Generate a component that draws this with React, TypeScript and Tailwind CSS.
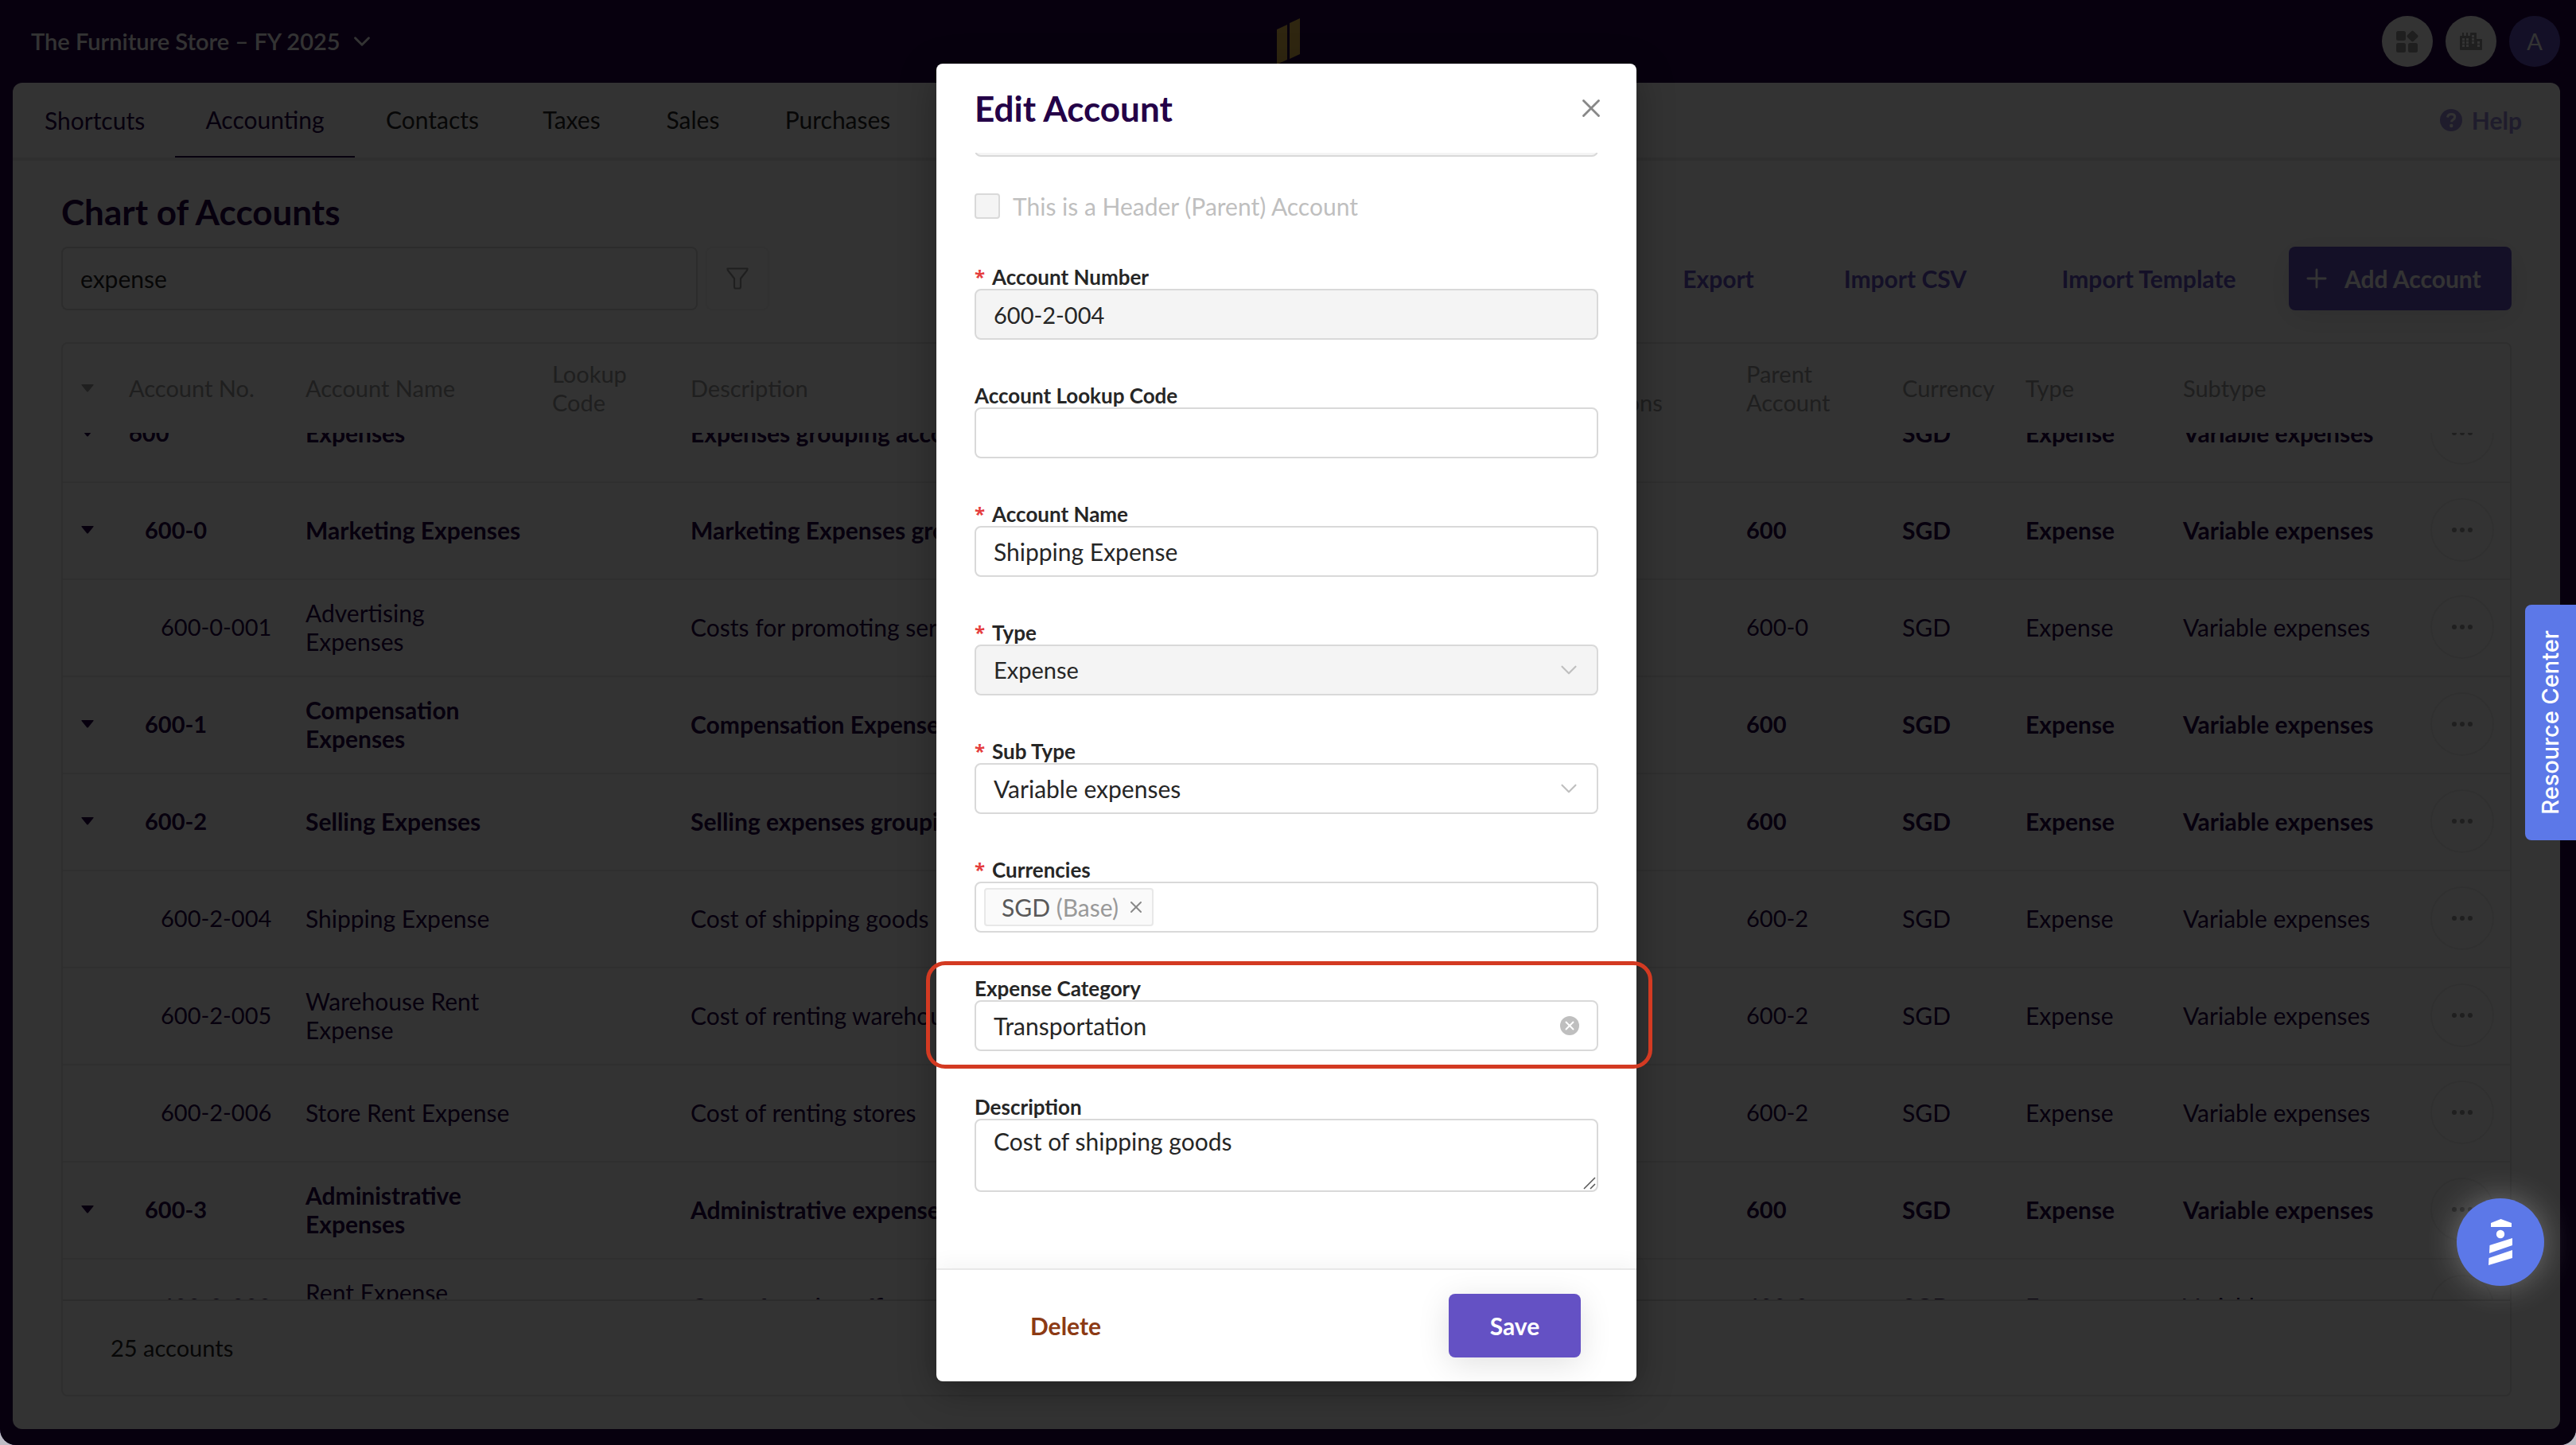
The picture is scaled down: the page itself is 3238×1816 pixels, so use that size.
import type { ReactNode } from 'react'
import { ChevronDown, Plus, X } from 'lucide-react'

interface Account {
  code: string
  name: string
  description: string
  parent: string
  level: number
  isHeader?: boolean
}

const tabs = [
  { label: 'Accounting', width: 'w-[226px]' },
  { label: 'Contacts', width: 'w-[195px]' },
  { label: 'Taxes', width: 'w-[155px]' },
  { label: 'Sales', width: 'w-[150px]' },
  { label: 'Purchases', width: 'w-[214px]' },
]

const accounts: Account[] = [
  { code: '600', name: 'Expenses', description: 'Expenses grouping account', parent: '', level: 0, isHeader: true },
  { code: '600-0', name: 'Marketing Expenses', description: 'Marketing Expenses grouping account', parent: '600', level: 1, isHeader: true },
  { code: '600-0-001', name: 'Advertising Expenses', description: 'Costs for promoting services', parent: '600-0', level: 2 },
  { code: '600-1', name: 'Compensation Expenses', description: 'Compensation Expenses grouping account', parent: '600', level: 1, isHeader: true },
  { code: '600-2', name: 'Selling Expenses', description: 'Selling expenses grouping account', parent: '600', level: 1, isHeader: true },
  { code: '600-2-004', name: 'Shipping Expense', description: 'Cost of shipping goods', parent: '600-2', level: 2 },
  { code: '600-2-005', name: 'Warehouse Rent Expense', description: 'Cost of renting warehouse', parent: '600-2', level: 2 },
  { code: '600-2-006', name: 'Store Rent Expense', description: 'Cost of renting stores', parent: '600-2', level: 2 },
  { code: '600-3', name: 'Administrative Expenses', description: 'Administrative expenses grouping account', parent: '600', level: 1, isHeader: true },
  { code: '600-3-002', name: 'Rent Expense Headquarters', description: 'Cost of renting office', parent: '600-3', level: 2 },
]

const indents = ['pl-0', 'pl-5', 'pl-10']

function Logo() {
  return (
    <svg width="29" height="58" viewBox="0 0 29 58" fill="#ebbe50" aria-hidden="true">
      <path d="M0 14 13 8v44L0 58z" />
      <path d="M16 6 29 0v45l-13 6z" />
    </svg>
  )
}

function Caret() {
  return (
    <svg width="16" height="10" viewBox="0 0 16 10" fill="currentColor" aria-hidden="true">
      <path d="M1 0h14q1 0 .5 1L9 9q-1 1-2 0L.5 1Q0 0 1 0z" />
    </svg>
  )
}

function AppsIcon() {
  return (
    <svg width="28" height="28" viewBox="0 0 28 28" fill="#999" aria-hidden="true">
      <rect x="0" y="1" width="12" height="12" rx="2.5" />
      <rect x="0" y="16" width="12" height="12" rx="2.5" />
      <rect x="15" y="16" width="12" height="12" rx="2.5" />
      <rect x="15" y="2" width="11" height="11" rx="2" transform="rotate(45 20.5 7.5)" />
    </svg>
  )
}

function CityIcon() {
  return (
    <svg width="28" height="24" viewBox="0 0 28 24" aria-hidden="true">
      <path fill="#999" d="M0 6q0-1 1-1h2V1h2v4h3V1h2v4h3V2q0-1 1-1h6q1 0 1 1v7h6q1 0 1 1v12q0 1-1 1H1q-1 0-1-1z" />
      <g fill="#fff">
        <path d="M3 8h3v3H3zM8 8h3v3H8zM3 12h3v3H3zM8 12h3v3H8zM3 16h3v3H3zM8 16h3v3H8z" />
        <path d="M15 4h3v3h-3zM15 8h3v3h-3zM15 12h3v3h-3zM22 12h3v3h-3zM22 16h3v3h-3z" />
      </g>
    </svg>
  )
}

function HelpIcon() {
  return (
    <svg width="28" height="28" viewBox="0 0 28 28" aria-hidden="true">
      <circle cx="14" cy="14" r="14" fill="#9a8edb" />
      <path d="M9.5 10.5q.6-4 4.7-4 4.5 0 4.5 3.6 0 2-2.3 3.4-1.9 1.2-1.9 2.7" fill="none" stroke="#fff" strokeWidth="3" />
      <circle cx="14.3" cy="21" r="2.2" fill="#fff" />
    </svg>
  )
}

function FunnelIcon() {
  return (
    <svg width="28" height="28" viewBox="0 0 28 28" fill="none" stroke="#999" strokeWidth="2.2" strokeLinejoin="round" aria-hidden="true">
      <path d="M1.5 1.5h25q0 2-1 3L18 14v10.5q0 2-2 2h-4q-2 0-2-2V14L2.5 4.5q-1-1-1-3z" />
    </svg>
  )
}

function LighthouseIcon() {
  return (
    <svg width="30" height="58" viewBox="0 0 30 58" fill="#fff" aria-hidden="true">
      <path d="M3 5 15.5 0 29 5v5H3z" />
      <circle cx="15" cy="19" r="5.2" />
      <path d="M1.5 33 30 24v9L1 43z" />
      <path d="M.5 49 30 39v10L0 58z" />
    </svg>
  )
}

function TopBar() {
  return (
    <header className="grid h-[104px] shrink-0 grid-cols-3 items-center px-5 text-white">
      <button className="flex items-center gap-[10px] pl-[19px] text-[29px] font-semibold">
        The Furniture Store – FY 2025
        <ChevronDown size={34} strokeWidth={2} />
      </button>
      <div className="flex justify-center">
        <Logo />
      </div>
      <div className="flex justify-end gap-4">
        <button aria-label="Apps" className="flex size-16 items-center justify-center rounded-full bg-white">
          <AppsIcon />
        </button>
        <button aria-label="Organization" className="flex size-16 items-center justify-center rounded-full bg-white">
          <CityIcon />
        </button>
        <button aria-label="Profile" className="flex size-16 items-center justify-center rounded-full bg-[#6451c4] text-[29px]">
          A
        </button>
      </div>
    </header>
  )
}

function TabBar() {
  return (
    <nav className="flex h-[98px] shrink-0 items-stretch border-b-4 border-[#e8e8e8] text-[30px] text-[#262626]">
      <a href="#shortcuts" className="flex w-[204px] items-center pl-10 text-[#240047]">
        Shortcuts
      </a>
      {tabs.map((tab, i) => (
        <a
          key={tab.label}
          href={`#${tab.label.toLowerCase()}`}
          className={`flex items-center justify-center border-b-2 ${tab.width} ${i === 0 ? 'border-[#240047] text-[#240047]' : 'border-transparent'}`}
        >
          {tab.label}
        </a>
      ))}
      <a href="#help" className="ml-auto flex items-center gap-3 pr-12 font-bold text-[#9a8edb]">
        <HelpIcon />
        Help
      </a>
    </nav>
  )
}

function Toolbar() {
  return (
    <div className="flex items-center">
      <input
        aria-label="Search accounts"
        defaultValue="expense"
        className="h-20 w-[800px] rounded-lg border-2 border-[#d9d9d9] px-[22px] text-[30px] text-[#262626]"
      />
      <button aria-label="Filter" className="ml-[10px] flex h-20 w-20 items-center justify-center rounded-lg border-2 border-[#f2f2f2]">
        <FunnelIcon />
      </button>
      <div className="ml-auto flex items-center text-[30px] font-bold text-[#6451c4]">
        <button className="w-[200px]">Export</button>
        <button className="w-[270px]">Import CSV</button>
        <button className="w-[342px]">Import Template</button>
        <button className="ml-[5px] flex h-20 w-[280px] items-center gap-4 rounded-lg bg-[#6451c4] pl-4 text-white shadow-[0_8px_40px_rgba(0,0,0,0.1)]">
          <Plus size={38} strokeWidth={1.8} />
          Add Account
        </button>
      </div>
    </div>
  )
}

function Columns() {
  return (
    <colgroup>
      <col className="w-[83px]" />
      <col className="w-[222px]" />
      <col className="w-[310px]" />
      <col className="w-[174px]" />
      <col />
      <col className="w-[264px]" />
      <col className="w-[196px]" />
      <col className="w-[155px]" />
      <col className="w-[198px]" />
      <col className="w-[291px]" />
      <col className="w-[120px]" />
    </colgroup>
  )
}

function AccountRow({ account }: { account: Account }) {
  return (
    <tr className={`h-[122px] border-b-2 border-[#ececec] *:pb-[2px] ${account.isHeader ? 'font-bold' : ''}`}>
      <td>
        <div className="flex pl-[23px]">{account.isHeader && <Caret />}</div>
      </td>
      <td className={`text-[29px] ${indents[account.level]}`}>{account.code}</td>
      <td className="pr-8">{account.name}</td>
      <td />
      <td>{account.description}</td>
      <td />
      <td className="text-[29px]">{account.parent}</td>
      <td>SGD</td>
      <td>Expense</td>
      <td>Variable expenses</td>
      <td>
        <button aria-label={`Actions for ${account.code}`} className="mx-auto flex size-20 items-center justify-center gap-1 rounded-full border-2 border-[#f0f0f0]">
          <span className="size-[6px] rounded-full bg-[#999]" />
          <span className="size-[6px] rounded-full bg-[#999]" />
          <span className="size-[6px] rounded-full bg-[#999]" />
        </button>
      </td>
    </tr>
  )
}

function AccountsTable() {
  return (
    <section className="mt-10 flex min-h-0 flex-1 flex-col rounded-lg border-2 border-[#e4e4e4] text-[30px] leading-9 text-[#240047]">
      <table className="w-full table-fixed text-left text-[29px] text-[#999]">
        <Columns />
        <thead>
          <tr className="h-[112px] *:font-normal">
            <th>
              <div className="flex pl-[23px]">
                <Caret />
              </div>
            </th>
            <th>Account No.</th>
            <th>Account Name</th>
            <th className="pr-8">Lookup Code</th>
            <th>Description</th>
            <th className="pr-[90px]">Total Transactions</th>
            <th className="pr-14">Parent Account</th>
            <th>Currency</th>
            <th>Type</th>
            <th>Subtype</th>
            <th />
          </tr>
        </thead>
      </table>
      <div className="min-h-0 flex-1 overflow-hidden">
        <table className="-mt-[60px] w-full table-fixed border-collapse">
          <Columns />
          <tbody>
            {accounts.map((account) => (
              <AccountRow key={account.code} account={account} />
            ))}
          </tbody>
        </table>
      </div>
      <footer className="flex h-[120px] shrink-0 items-center border-t-2 border-[#d9d9d9] pl-[60px] text-[29px] text-[#262626]">25 accounts</footer>
    </section>
  )
}

interface FieldProps {
  id: string
  label: string
  required?: boolean
  children: ReactNode
}

function Field({ id, label, required, children }: FieldProps) {
  return (
    <div className="mb-[55px]">
      <label htmlFor={id} className="flex h-[30px] items-center gap-[9px] text-[26px] leading-7 font-bold text-[#262626]">
        {required && <span className="font-['Open_Sans',sans-serif] text-2xl leading-7 font-bold text-[#e53e3e]">*</span>}
        {label}
      </label>
      {children}
    </div>
  )
}

const control = 'block h-16 w-full rounded-lg border-2 border-[#d9d9d9] bg-white px-[22px] text-[30px] text-[#262626]'
const disabledControl = 'block h-16 w-full rounded-lg border-2 border-[#d9d9d9] bg-[#f4f4f4] px-[22px] text-[29px] text-[#262626] opacity-100'

function SelectBox({ id, value, disabled }: { id: string; value: string; disabled?: boolean }) {
  return (
    <div className="relative">
      <select id={id} disabled={disabled} className={`appearance-none ${disabled ? disabledControl : control}`}>
        <option>{value}</option>
      </select>
      <ChevronDown size={34} strokeWidth={1.5} className="pointer-events-none absolute top-[15px] right-5 text-[#bfbfbf]" />
    </div>
  )
}

function EditAccountModal() {
  return (
    <div role="dialog" aria-label="Edit Account" className="relative flex h-full w-[880px] flex-col rounded-lg bg-white shadow-[0_12px_48px_rgba(0,0,0,0.3)]">
      <header className="flex h-28 shrink-0 items-center justify-between pr-[38px] pl-12">
        <h2 className="text-[44px] font-bold text-[#240047]">Edit Account</h2>
        <button aria-label="Close" className="text-[#888]">
          <X size={38} strokeWidth={1.8} />
        </button>
      </header>

      <form className="min-h-0 flex-1 overflow-hidden px-12">
        <input aria-label="Organization" disabled className={`-mt-[59px] mb-[46px] ${disabledControl}`} />
        <label className="mb-[58px] flex h-8 items-center gap-4 text-[30px] text-[#bfbfbf]">
          <input type="checkbox" disabled className="size-8 appearance-none rounded-sm border-2 border-[#d9d9d9] bg-[#f4f4f4]" />
          This is a Header (Parent) Account
        </label>
        <Field id="number" label="Account Number" required>
          <input id="number" disabled defaultValue="600-2-004" className={disabledControl} />
        </Field>
        <Field id="lookup" label="Account Lookup Code">
          <input id="lookup" className={control} />
        </Field>
        <Field id="name" label="Account Name" required>
          <input id="name" defaultValue="Shipping Expense" className={control} />
        </Field>
        <Field id="type" label="Type" required>
          <SelectBox id="type" value="Expense" disabled />
        </Field>
        <Field id="subtype" label="Sub Type" required>
          <SelectBox id="subtype" value="Variable expenses" />
        </Field>
        <Field id="currencies" label="Currencies" required>
          <div className="flex h-16 items-center rounded-lg border-2 border-[#d9d9d9] pl-[10px] text-[30px]">
            <span className="flex h-12 w-[213px] items-center rounded-sm border-2 border-[#e8e8e8] bg-[#fafafa] pl-5 whitespace-pre text-[#595959]">
              SGD <span className="text-[#999]">(Base)</span>
              <button type="button" aria-label="Remove SGD" className="mr-2 ml-auto text-[#888]">
                <X size={24} strokeWidth={2} />
              </button>
            </span>
            <input id="currencies" className="min-w-0 flex-1 outline-none" />
          </div>
        </Field>
        <Field id="category" label="Expense Category">
          <div className="relative">
            <input id="category" defaultValue="Transportation" className={control} />
            <button type="button" aria-label="Clear category" className="absolute top-5 right-6 flex size-6 items-center justify-center rounded-full bg-[#bfbfbf] text-white">
              <X size={18} strokeWidth={2.5} />
            </button>
          </div>
        </Field>
        <Field id="description" label="Description">
          <div className="relative">
            <textarea
              id="description"
              defaultValue="Cost of shipping goods"
              className="block h-[92px] w-full resize-none overflow-hidden rounded-lg border-2 border-[#d9d9d9] px-[22px] py-2 text-[30px] leading-9 text-[#262626]"
            />
            <svg width="16" height="16" viewBox="0 0 16 16" fill="none" stroke="#555" strokeWidth="1.5" className="pointer-events-none absolute right-[3px] bottom-[3px]" aria-hidden="true">
              <path d="M1 15 15 1M9 15l6-6" />
            </svg>
          </div>
        </Field>
      </form>

      <footer className="flex h-[142px] shrink-0 items-center justify-between rounded-b-lg border-t-2 border-[#e8e8e8] pr-[70px] pl-[118px] text-[30px] font-bold shadow-[0_-8px_24px_rgba(0,0,0,0.04)]">
        <button className="text-[#8c3a14]">Delete</button>
        <button className="h-20 w-[166px] rounded-lg bg-[#6451c4] text-white shadow-[0_8px_40px_rgba(0,0,0,0.12)]">Save</button>
      </footer>

      {/* callout around the expense category field */}
      <div className="pointer-events-none absolute top-[1128px] -right-5 -left-[13px] h-[135px] rounded-3xl border-5 border-[#d33a22]" />
    </div>
  )
}

export default function App() {
  return (
    <div className="h-screen bg-[#bdbcc4] font-['Lato',sans-serif]">
      <div className="relative flex h-full flex-col overflow-hidden rounded-b-[20px] bg-[#240047]">
        <TopBar />
        <main className="mr-5 mb-5 ml-4 flex min-h-0 flex-1 flex-col rounded-xl bg-white">
          <TabBar />
          <div className="flex min-h-0 flex-1 flex-col px-[61px] pt-[34px] pb-[41px]">
            <h1 className="mb-[14px] text-[44px] leading-[60px] font-bold text-[#240047]">Chart of Accounts</h1>
            <Toolbar />
            <AccountsTable />
          </div>
        </main>

        <div className="absolute inset-0 flex justify-center bg-black/80 py-20 pr-1">
          <EditAccountModal />
        </div>

        <button className="absolute top-[760px] right-0 flex h-[296px] w-16 items-center justify-center rounded-l-lg bg-[#5c78e8] font-['Inter',sans-serif] text-[29px] font-medium text-white">
          <span className="rotate-180 [writing-mode:vertical-rl]">Resource Center</span>
        </button>
        <button
          aria-label="Open help beacon"
          className="absolute right-10 bottom-[200px] flex size-[110px] items-center justify-center rounded-full bg-[#5c78e8] shadow-[0_0_40px_rgba(255,255,255,0.3)]"
        >
          <LighthouseIcon />
        </button>
      </div>
    </div>
  )
}
